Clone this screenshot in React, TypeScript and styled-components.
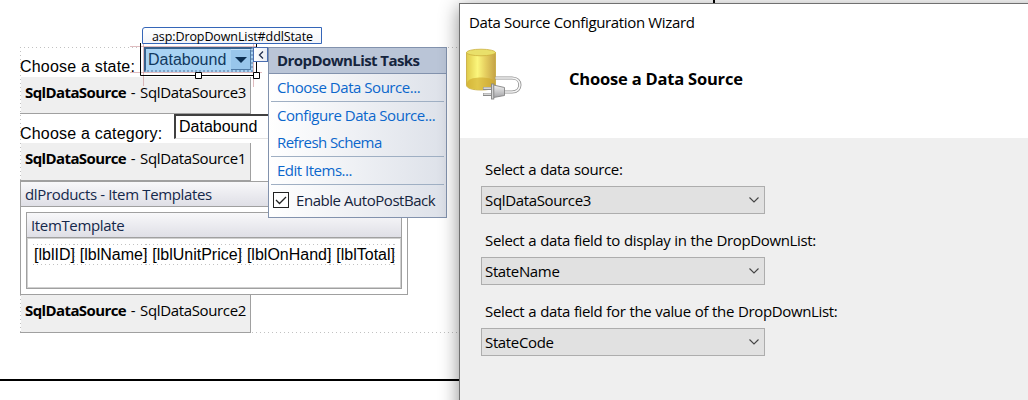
import React from "react";
import styled, { createGlobalStyle, css } from "styled-components";

const uiFont = `"Open Sans", "Noto Sans", sans-serif`;
const pageFont = `"Liberation Sans", Arial, sans-serif`;
const dotsAcross = `repeating-linear-gradient(90deg, #c2c2c2 0 1px, transparent 1px 4px)`;
const dotsDown = `repeating-linear-gradient(180deg, #c2c2c2 0 1px, transparent 1px 4px)`;

const GlobalStyle = createGlobalStyle`
  * { box-sizing: border-box; }
  body { margin: 0; background: #fff; overflow: hidden; font: 15px ${uiFont}; }
`;

const Screen = styled.div`
  width: 1028px;
  height: 400px;
  display: grid;
  grid-template-columns: 459px 569px;
  overflow: hidden;
  background: #fff;
  color: #000;
`;

const UiText = styled.span<{ $spacing?: number; $word?: number; $size?: number; $bold?: boolean }>`
  font-family: ${uiFont};
  font-size: ${(p) => p.$size ?? 15}px;
  font-weight: ${(p) => (p.$bold ? 700 : 400)};
  letter-spacing: ${(p) => p.$spacing ?? -0.35}px;
  word-spacing: ${(p) => p.$word ?? 0}px;
  white-space: pre;
`;

const Surface = styled.main`
  position: relative;
  height: 381px;
  padding: 47px 0 0 20px;
  border-bottom: 2px solid #000;
`;

const Form = styled.div`
  height: 286px;
  background:
    ${dotsAcross} 0 0 / 100% 1px no-repeat,
    ${dotsAcross} 0 100% / 100% 1px no-repeat,
    ${dotsDown} 0 0 / 1px 100% no-repeat;
`;

const FieldRow = styled.div<{ $height: number }>`
  display: flex;
  align-items: flex-start;
  height: ${(p) => p.$height}px;
`;

const FieldLabel = styled.label<{ $width: number }>`
  width: ${(p) => p.$width}px;
  padding-top: 11px;
  font: 16px/18px ${pageFont};
  letter-spacing: 0.2px;
  white-space: nowrap;
`;

const PageSelect = styled.div<{ $selected?: boolean }>`
  display: flex;
  justify-content: space-between;
  width: 110px;
  height: 25px;
  padding: 1px 2px 1px 3px;
  border: 1px solid #e3e3e3;
  border-top: 2px solid #404040;
  border-left: 2px solid #404040;
  background: #fff;
  font: 16px/20px ${pageFont};
  ${(p) =>
    p.$selected &&
    css`
      width: 109px;
      padding: 0 0 0 2px;
      border: 2px dotted #7fa4c8;
      border-top: 2px solid #38618c;
      border-left: 2px solid #38618c;
      background: #a9d3f3;
      color: #12395e;
      line-height: 22px;
    `}
`;

const SelectArrow = styled.span`
  display: flex;
  align-items: center;
  justify-content: center;
  width: 20px;
  height: 21px;
  border-right: 1px solid #4f7ba6;
  border-bottom: 1px solid #4f7ba6;
  border-top: 1px solid #c4e3fa;
  background: #98c6eb;
`;

const SourceBlock = styled.div<{ $height: number }>`
  width: 231px;
  height: ${(p) => p.$height}px;
  padding: 3px 0 0 5px;
  border-right: 1px solid #a0a0a0;
  border-bottom: 1px solid #a0a0a0;
  background: linear-gradient(#efefef, #efefef) 1px 0 no-repeat;
  line-height: 24px;
  white-space: nowrap;
`;

const DataList = styled.section`
  width: 388px;
  height: 114px;
  border: 1px solid #a0a0a0;
  background: #fff;
`;

const TemplateHeader = styled.header`
  height: 25px;
  padding-left: 4px;
  border-bottom: 1px solid #a0a0a0;
  background: linear-gradient(#f8f8fa, #dfdfe6);
  color: #15284b;
  line-height: 25px;
`;

const ItemTemplate = styled.section`
  width: 376px;
  height: 77px;
  margin: 5px 0 0 5px;
  border: 1px solid #a0a0a0;
`;

const TemplateBody = styled.div`
  height: 50px;
  padding: 5px 0 0 5px;
  border: 1px solid #d0d0d0;
`;

const BoundLabels = styled.div`
  display: flex;
  justify-content: space-between;
  width: 362px;
  height: 21px;
  padding: 0 0 0 1px;
  background:
    ${dotsAcross} 0 0 / 100% 1px no-repeat,
    ${dotsAcross} 0 100% / 100% 1px no-repeat;
  font: 16px/21px ${pageFont};
`;

const BoundLabel = styled.span`
  background: ${dotsDown} 100% 0 / 1px 100% no-repeat;
`;

const SelectionLayer = styled.svg`
  position: absolute;
  left: 128px;
  top: 40px;
`;

const ElementTag = styled.div`
  position: absolute;
  left: 142px;
  top: 27px;
  width: 180px;
  height: 17px;
  padding-left: 9px;
  border: 1px solid #3566b8;
  border-radius: 3px 0 0 0;
  background: linear-gradient(#fff, #f2f4f9);
  line-height: 14px;
`;

const TagToggle = styled.button`
  position: absolute;
  left: 253px;
  top: 47px;
  display: flex;
  align-items: center;
  justify-content: center;
  width: 15px;
  height: 15px;
  padding: 0;
  border: 1px solid #4a6eb0;
  background: linear-gradient(90deg, #fff, #e8ecf4);
`;

const TaskPanel = styled.aside`
  position: absolute;
  left: 268px;
  top: 47px;
  width: 179px;
  height: 171px;
  border: 1px solid #8292ad;
  background: linear-gradient(90deg, #fff, #dde1e9);
`;

const TaskTitle = styled.h2`
  height: 26px;
  margin: 0;
  padding-left: 8px;
  border-bottom: 1px solid #8292ad;
  background: #bac5d7;
  color: #15243d;
  font-size: 15px;
  line-height: 25px;
`;

const TaskLink = styled.a<{ $divided?: boolean }>`
  display: block;
  height: ${(p) => (p.$divided ? 28 : 27)}px;
  margin: 0 2px;
  padding-left: 6px;
  border-bottom: ${(p) => (p.$divided ? "1px solid #9fafc3" : "0")};
  color: #0b67cc;
  line-height: 26px;
`;

const TaskCheck = styled.label`
  display: flex;
  align-items: center;
  gap: 7px;
  height: 29px;
  padding-left: 4px;
  color: #15243d;
`;

const CheckBox = styled.span`
  display: flex;
  width: 16px;
  height: 16px;
  border: 1px solid #222;
  background: #fff;
`;

const DialogArea = styled.div`
  height: 400px;
  padding-top: 3px;
  background: linear-gradient(#000, #000) 254px 0 / 2px 3px no-repeat;
`;

const Dialog = styled.section`
  position: relative;
  width: 600px;
  height: 430px;
  border: 1px solid #707070;
  background: #efefef;
  box-shadow: 0 4px 18px rgba(0, 0, 0, 0.45);
`;

const DialogTop = styled.header`
  height: 134px;
  background: #fff;
`;

const DialogTitle = styled.div`
  height: 44px;
  padding: 6px 0 0 9px;
  line-height: 24px;
`;

const Banner = styled.div`
  display: flex;
  gap: 47px;
  padding-left: 5px;
`;

const BannerHeading = styled.h1`
  margin: 19px 0 0;
  font-size: 16px;
  line-height: 24px;
`;

const DialogBody = styled.div`
  display: flex;
  flex-direction: column;
  gap: 14px;
  padding: 20px 0 0 21px;
`;

const Field = styled.div`
  height: 57px;
`;

const FieldCaption = styled.div`
  height: 28px;
  padding-left: 4px;
  line-height: 22px;
`;

const Combo = styled.div`
  display: flex;
  align-items: center;
  justify-content: space-between;
  width: 284px;
  height: 28px;
  padding: 0 5px 0 3px;
  border: 1px solid #adadad;
  background: #e1e1e1;
`;

const DataSourceIcon = () => (
  <svg width="57" height="54" viewBox="0 0 57 54">
    <defs>
      <linearGradient id="side">
        <stop offset="0" stopColor="#dfca4a" />
        <stop offset="0.38" stopColor="#fbf67c" />
        <stop offset="0.65" stopColor="#e6cf60" />
        <stop offset="1" stopColor="#c4a246" />
      </linearGradient>
      <linearGradient id="plug" x1="0" y1="0" x2="0" y2="1">
        <stop offset="0" stopColor="#f1f1f1" />
        <stop offset="1" stopColor="#a5a5a8" />
      </linearGradient>
    </defs>
    <path d="M1.5 4.5V37C1.5 40.5 8 42 16 42S30.5 40.5 30.5 37V4.5Z" fill="url(#side)" stroke="#c5a73a" strokeWidth="0.8" />
    <path d="M2 34.500C4 30 11 29.500 16 29.500S28 30 30 34.500V37C30 40 24 41.500 16 41.500S2 40 2 37Z" fill="#cfa82c" opacity="0.6" />
    <ellipse cx="16" cy="4.500" rx="14.500" ry="3.300" fill="#e9e06a" stroke="#cbb03e" strokeWidth="0.8" />
    <path d="M30.500 30H47C57.500 30 57.500 44 47 44H39" fill="none" stroke="#8f8f8f" strokeWidth="3.200" />
    <path d="M30.500 30H47C57.500 30 57.500 44 47 44H39" fill="none" stroke="#f4f4f4" strokeWidth="1.600" />
    <path d="M18 40.500h9M18 46.500h9" stroke="#8a8a8a" strokeWidth="2.800" />
    <path d="M18.500 40.200h8M18.500 46.200h8" stroke="#f0f0f0" strokeWidth="1.300" />
    <path d="M28.500 37L39.500 39.500V47.500L28.500 49.500Z" fill="url(#plug)" stroke="#858585" strokeWidth="0.9" />
    <rect x="26.500" y="36" width="2.300" height="15" fill="#d3d3d3" stroke="#858585" strokeWidth="0.9" />
  </svg>
);

const Chevron = () => (
  <svg width="10" height="6" viewBox="0 0 10 6" fill="none" stroke="#444" strokeWidth="1.1">
    <path d="M0.5 0.5L5 5L9.5 0.5" />
  </svg>
);

const sources = [
  { caption: "Select a data source:", value: "SqlDataSource3" },
  { caption: "Select a data field to display in the DropDownList:", value: "StateName" },
  { caption: "Select a data field for the value of the DropDownList:", value: "StateCode" },
];

const Source = ({ id, height }: { id: string; height: number }) => (
  <SourceBlock $height={height}>
    <UiText $bold $spacing={-0.6}>SqlDataSource</UiText>
    <UiText $word={1.2}> - {id}</UiText>
  </SourceBlock>
);

export default function App() {
  return (
    <Screen>
      <GlobalStyle />
      <Surface>
        <Form>
          <FieldRow $height={30}>
            <FieldLabel $width={124}>Choose a state:</FieldLabel>
            <PageSelect $selected>
              Databound
              <SelectArrow>
                <svg width="12" height="6"><path d="M0 0H12L6 6Z" fill="#0b2f52" /></svg>
              </SelectArrow>
            </PageSelect>
          </FieldRow>
          <Source id="SqlDataSource3" height={37} />
          <FieldRow $height={29}>
            <FieldLabel $width={154}>Choose a category:</FieldLabel>
            <PageSelect>Databound</PageSelect>
          </FieldRow>
          <Source id="SqlDataSource1" height={38} />
          <DataList>
            <TemplateHeader><UiText>dlProducts - Item Templates</UiText></TemplateHeader>
            <ItemTemplate>
              <TemplateHeader><UiText>ItemTemplate</UiText></TemplateHeader>
              <TemplateBody>
                <BoundLabels>
                  {["[lblID]", "[lblName]", "[lblUnitPrice]", "[lblOnHand]", "[lblTotal]"].map((name) => (
                    <BoundLabel key={name}>{name}</BoundLabel>
                  ))}
                </BoundLabels>
              </TemplateBody>
            </ItemTemplate>
          </DataList>
          <Source id="SqlDataSource2" height={38} />
        </Form>
        <SelectionLayer width="134" height="50" fill="none">
          <path d="M2 6.5H128M2 32.5H150M15.5 3V46M125.5 3V47" stroke="#c98f95" strokeOpacity="0.6" />
          <path d="M12.5 3V35.5H128.5V3" stroke="#000" />
          <path d="M67.5 32.5h6v6h-6ZM125.5 32.5h6v6h-6Z" fill="#fff" stroke="#000" />
        </SelectionLayer>
        <ElementTag><UiText $size={12.5} $spacing={-0.1}>asp:DropDownList#ddlState</UiText></ElementTag>
        <TagToggle>
          <svg width="6" height="8" fill="none" stroke="#222f4d" strokeWidth="1.3"><path d="M5 0.5L1.5 4L5 7.5" /></svg>
        </TagToggle>
        <TaskPanel>
          <TaskTitle><UiText $bold $spacing={-0.57}>DropDownList Tasks</UiText></TaskTitle>
          <TaskLink $divided><UiText $spacing={-0.47}>Choose Data Source...</UiText></TaskLink>
          <TaskLink><UiText $spacing={-0.45}>Configure Data Source...</UiText></TaskLink>
          <TaskLink $divided><UiText $spacing={-0.58}>Refresh Schema</UiText></TaskLink>
          <TaskLink $divided><UiText $spacing={-0.5}>Edit Items...</UiText></TaskLink>
          <TaskCheck>
            <CheckBox>
              <svg width="14" height="14" viewBox="0 0 14 14" fill="none" stroke="#222" strokeWidth="1.3"><path d="M2 7L5.5 10.5L12 4" /></svg>
            </CheckBox>
            <UiText $spacing={-0.45}>Enable AutoPostBack</UiText>
          </TaskCheck>
        </TaskPanel>
      </Surface>
      <DialogArea>
        <Dialog>
          <DialogTop>
            <DialogTitle><UiText>Data Source Configuration Wizard</UiText></DialogTitle>
            <Banner>
              <DataSourceIcon />
              <BannerHeading><UiText $bold $size={16.5} $spacing={-0.2}>Choose a Data Source</UiText></BannerHeading>
            </Banner>
          </DialogTop>
          <DialogBody>
            {sources.map((s) => (
              <Field key={s.value}>
                <FieldCaption><UiText $word={0.4}>{s.caption}</UiText></FieldCaption>
                <Combo><UiText>{s.value}</UiText><Chevron /></Combo>
              </Field>
            ))}
          </DialogBody>
        </Dialog>
      </DialogArea>
    </Screen>
  );
}
